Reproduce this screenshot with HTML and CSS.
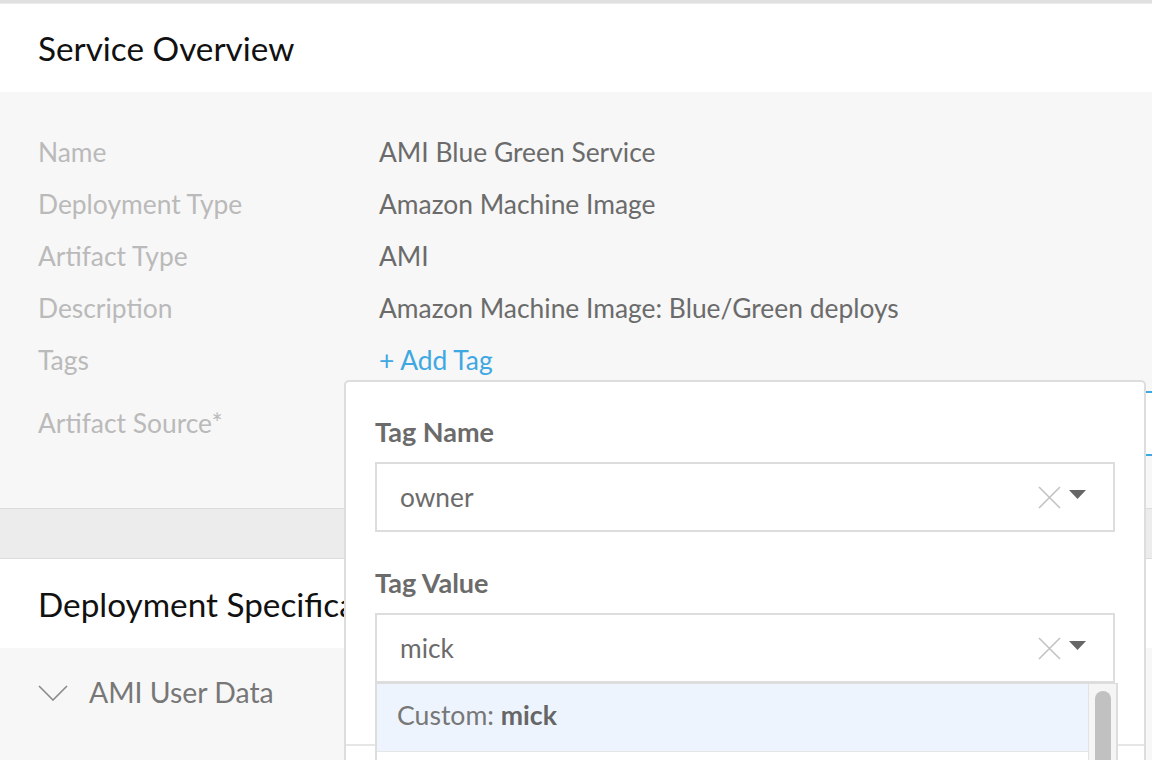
FILE: index.html
```html
<!DOCTYPE html>
<html lang="en">
<head>
<meta charset="utf-8">
<title>Service Overview</title>
<link rel="stylesheet" href="styles.css">
</head>
<body>
<div class="page">
  <div class="topline"></div>
  <div class="section-head"><h2>Service Overview</h2></div>
  <div class="overview">
    <div class="row"><div class="label">Name</div><div class="value">AMI Blue Green Service</div></div>
    <div class="row"><div class="label">Deployment Type</div><div class="value">Amazon Machine Image</div></div>
    <div class="row"><div class="label">Artifact Type</div><div class="value">AMI</div></div>
    <div class="row"><div class="label">Description</div><div class="value">Amazon Machine Image: Blue/Green deploys</div></div>
    <div class="row"><div class="label">Tags</div><div class="value"><span class="link">+ Add Tag</span></div></div>
    <div class="row row-source"><div class="label">Artifact Source*</div><div class="select-box"></div></div>
  </div>
  <div class="band"></div>
  <div class="section-head section-head-2"><h2>Deployment Specification</h2></div>
  <div class="collapsible">
    <svg class="chevron" width="30" height="16" viewBox="0 0 30 16"><path d="M1 1L15 15L29 1" fill="none" stroke="#8a8a8a" stroke-width="1.6"/></svg>
    <span>AMI User Data</span>
  </div>

  <div class="popover">
    <div class="field">
      <div class="field-label">Tag Name</div>
      <div class="input">
        <span class="text">owner</span>
        <svg class="clear" width="23" height="23" viewBox="0 0 23 23"><path d="M1 1L22 22M22 1L1 22" stroke="#c2c2c2" stroke-width="1.6"/></svg>
        <svg class="caret" width="17" height="9" viewBox="0 0 17 9"><path d="M0 0H17L8.5 9Z" fill="#666"/></svg>
      </div>
    </div>
    <div class="field field-2">
      <div class="field-label">Tag Value</div>
      <div class="input">
        <span class="text">mick</span>
        <svg class="clear" width="23" height="23" viewBox="0 0 23 23"><path d="M1 1L22 22M22 1L1 22" stroke="#c2c2c2" stroke-width="1.6"/></svg>
        <svg class="caret" width="17" height="9" viewBox="0 0 17 9"><path d="M0 0H17L8.5 9Z" fill="#666"/></svg>
        <div class="menu">
          <div class="options">
            <div class="option">Custom:&nbsp;<b>mick</b></div>
          </div>
          <div class="scroll"><div class="thumb"></div></div>
        </div>
      </div>
    </div>
    <div class="divider"></div>
  </div>
</div>
</body>
</html>
```

FILE: styles.css
```css
html, body {
  margin: 0;
  padding: 0;
}
body {
  font-family: Lato, "Liberation Sans", sans-serif;
  background: #f7f7f7;
  overflow: hidden;
}
.page {
  position: relative;
  width: 1152px;
  height: 760px;
  overflow: hidden;
  background: #f7f7f7;
}
.topline {
  height: 3px;
  background: #e0e0e0;
  border-bottom: 1px solid #ebebeb;
}
.section-head {
  background: #fff;
  height: 88px;
  display: flex;
  align-items: center;
  padding-left: 38px;
}
.section-head-2 {
  height: 89px;
}
.section-head h2 {
  margin: 0;
  font-weight: 400;
  font-size: 33.3px;
  color: #111;
  white-space: nowrap;
}
.overview {
  background: #f7f7f7;
  padding: 35px 0 52px 38px;
}
.row {
  display: grid;
  grid-template-columns: 341px 1fr;
  height: 52px;
  align-items: center;
  font-size: 26.4px;
  white-space: nowrap;
}
.row .label,
.row .value {
  padding-bottom: 2px;
}
.label {
  color: #bababa;
}
.value {
  color: #6b6b6b;
}
.link {
  color: #3ea8e2;
}
.row-source {
  height: 65px;
  margin-top: 4px;
}
.select-box {
  height: 65px;
  width: 800px;
  box-sizing: border-box;
  border: 2px solid #3ea8e2;
  border-radius: 3px;
  background: #fff;
}
.band {
  height: 49px;
  background: #ececec;
  border-top: 1px solid #dcdcdc;
  border-bottom: 1px solid #dcdcdc;
}
.collapsible {
  height: 90px;
  display: flex;
  align-items: center;
  gap: 21px;
  padding-left: 38px;
  font-size: 28.4px;
  color: #777;
}
.collapsible span {
  padding-bottom: 2px;
}
.chevron {
  display: block;
}

/* popover */
.popover {
  position: absolute;
  left: 344px;
  top: 380px;
  width: 802px;
  height: 420px;
  box-sizing: border-box;
  border: 2px solid #dddddd;
  border-radius: 5px;
  background: #fff;
  padding: 32px 29px 0 29px;
}
.field-label {
  font-size: 27px;
  font-weight: 700;
  color: #6b6b6b;
  line-height: 36px;
  margin-bottom: 12px;
}
.field-2 {
  margin-top: 33px;
}
.input {
  position: relative;
  height: 70px;
  box-sizing: border-box;
  border: 2px solid #dddddd;
  display: flex;
  align-items: center;
  padding: 0 27px 0 23px;
  font-size: 26.3px;
  color: #6b6b6b;
}
.input .text {
  flex: 1;
}
.clear {
  display: block;
  margin-right: 8px;
}
.caret {
  display: block;
  margin-top: -6px;
}
.divider {
  margin: 61px -29px 0;
  border-top: 2px solid #e6e6e6;
}
.menu {
  position: absolute;
  left: -2px;
  top: calc(100% + 2px);
  width: 743px;
  height: 200px;
  box-sizing: border-box;
  border: 2px solid #dddddd;
  border-top: 1px solid #dddddd;
  background: #fff;
  display: flex;
  z-index: 2;
}
.options {
  flex: 1;
}
.option {
  height: 68px;
  box-sizing: border-box;
  background: #edf4fd;
  border-bottom: 1px solid #e6e6e6;
  display: flex;
  align-items: center;
  padding-left: 20px;
  padding-bottom: 6px;
  font-size: 26.6px;
  color: #777;
}
.option b {
  color: #666;
  font-weight: 700;
}
.scroll {
  width: 28px;
  box-sizing: border-box;
  background: #f5f5f5;
  border-left: 1px solid #e3e3e3;
  padding: 7px 5px 0 6px;
}
.thumb {
  height: 200px;
  background: #c1c1c1;
  border-radius: 8px;
}
```
